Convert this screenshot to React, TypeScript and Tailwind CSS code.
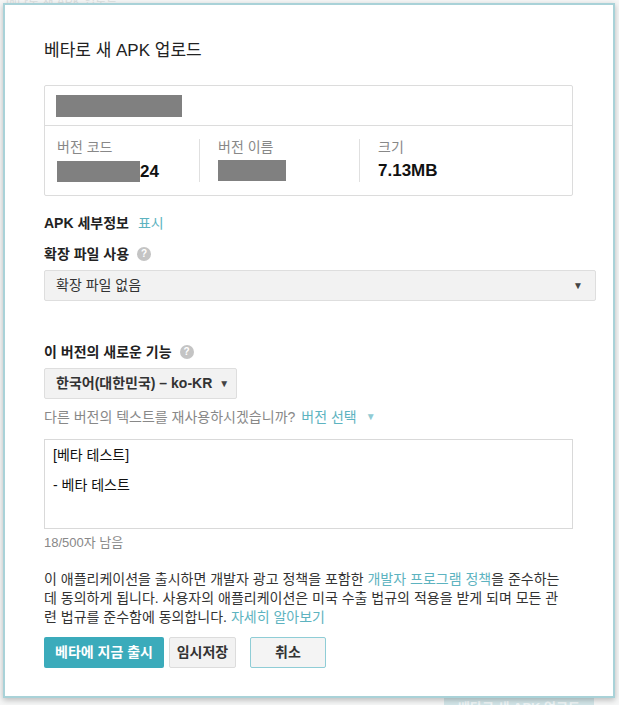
const font = {
  fontFamily: '"Liberation Sans", Arial, "Noto Sans CJK KR", sans-serif',
};

const HelpIcon = () => (
  <span className="inline-flex items-center justify-center w-[14px] h-[14px] rounded-full bg-[#c4c4c4] text-white text-[10px] font-bold leading-none ml-[8px]">
    ?
  </span>
);

const Caret = ({ className = "" }: { className?: string }) => (
  <span className={`inline-block text-[10px] leading-none ${className}`}>▼</span>
);

export default function App() {
  return (
    <div
      className="relative w-[619px] h-[705px] bg-[#f6f7f7] overflow-hidden text-[#333]"
      style={font}
    >
      {/* faded page content behind the dialog */}
      <div className="absolute left-[6px] top-[-7px] text-[12px] text-[#dde2e2]">
        베타로 새 APK 업로드
      </div>
      <div className="absolute left-[444px] top-[697px] w-[150px] h-[20px] bg-[#d3e6e9] text-[#f2f8f9] text-[13px] font-bold flex justify-center pt-[1px]">
        베타로 새 APK 업로드
      </div>

      <div className="absolute left-[3px] top-[3px] w-[612px] h-[695px] bg-white border-2 border-[#a9d2d8] shadow-[0_2px_6px_rgba(0,0,0,0.25)] pl-[39px] pr-[17px] pt-[34px]">
        <h1 className="text-[17px] leading-[24px] text-[#222]">베타로 새 APK 업로드</h1>

        {/* apk card */}
        <div className="mt-[22px] w-[529px] border border-[#dcdcdc] rounded-[2px]">
          <div className="h-[40px] border-b border-[#dcdcdc] px-[11px] flex items-center">
            <div className="w-[126px] h-[22px] bg-[#808080]" />
          </div>
          <div className="flex py-[13px]">
            <div className="w-[155px] px-[12px] border-r border-[#e0e0e0]">
              <div className="text-[14px] leading-[17px] text-[#888]">버전 코드</div>
              <div className="flex items-end mt-[4px] h-[22px]">
                <div className="w-[83px] h-[21px] bg-[#808080]" />
                <span className="text-[17px] font-bold leading-[20px] text-[#111]">24</span>
              </div>
            </div>
            <div className="w-[160px] px-[18px] border-r border-[#e0e0e0]">
              <div className="text-[14px] leading-[17px] text-[#888]">버전 이름</div>
              <div className="mt-[4px] w-[68px] h-[21px] bg-[#808080]" />
            </div>
            <div className="px-[18px]">
              <div className="text-[14px] leading-[17px] text-[#888]">크기</div>
              <div className="mt-[4px] text-[17px] font-bold leading-[22px] text-[#111]">7.13MB</div>
            </div>
          </div>
        </div>

        <div className="mt-[17px] flex items-center text-[14px] leading-[20px]">
          <span className="font-bold text-[#222]">APK 세부정보</span>
          <span className="ml-[9px] text-[#5db3c0]">표시</span>
        </div>

        <div className="mt-[11px] flex items-center text-[14px] leading-[20px] font-bold text-[#222]">
          확장 파일 사용
          <HelpIcon />
        </div>

        <div className="mt-[6px] h-[31px] w-[552px] bg-[#f2f2f2] border border-[#dedede] rounded-[2px] flex items-center justify-between pl-[11px] pr-[12px] text-[14px] text-[#333]">
          <span>확장 파일 없음</span>
          <Caret className="text-[#444]" />
        </div>

        <div className="mt-[41px] flex items-center text-[14px] leading-[20px] font-bold text-[#222]">
          이 버전의 새로운 기능
          <HelpIcon />
        </div>

        <button className="mt-[6px] h-[31px] w-[193px] bg-[#f2f2f2] border border-[#dedede] rounded-[2px] flex items-center pl-[11px] text-[14px] text-[#333] font-bold">
          <span>한국어(대한민국) – ko-KR</span>
          <Caret className="ml-[7px] text-[#444]" />
        </button>

        <div className="mt-[8px] text-[14px] leading-[20px] text-[#888] flex items-center">
          다른 버전의 텍스트를 재사용하시겠습니까?
          <span className="ml-[6px] text-[#5db3c0]">버전 선택</span>
          <Caret className="ml-[9px] text-[#8fcbd4]" />
        </div>

        <div className="mt-[12px] w-[529px] h-[90px] border border-[#d9d9d9] px-[8px] pt-[7px] text-[14px] leading-[16px] text-[#111]">
          <div>[베타 테스트]</div>
          <div className="mt-[14px]">- 베타 테스트</div>
        </div>

        <div className="mt-[5px] text-[13px] leading-[18px] text-[#888]">18/500자 남음</div>

        <p className="mt-[18px] w-[526px] text-[14px] leading-[19px] text-[#333] break-all">
          이 애플리케이션을 출시하면 개발자 광고 정책을 포함한{" "}
          <span className="text-[#5db3c0]">개발자 프로그램 정책</span>을 준수하는 데 동의하게 됩니다.
          사용자의 애플리케이션은 미국 수출 법규의 적용을 받게 되며 모든 관련 법규를 준수함에
          동의합니다. <span className="text-[#5db3c0]">자세히 알아보기</span>
        </p>

        <div className="mt-[10px] flex gap-[5px]">
          <button className="h-[31px] w-[120px] rounded-[2px] bg-[#3babbb] text-white text-[14px] font-bold">
            베타에 지금 출시
          </button>
          <button className="h-[31px] w-[67px] rounded-[2px] bg-[#f2f2f2] border border-[#dcdcdc] text-[#333] text-[14px] font-bold">
            임시저장
          </button>
          <button className="ml-[9px] h-[31px] w-[76px] rounded-[2px] bg-[#f4f4f4] border border-[#8fcdd6] text-[#333] text-[14px] font-bold">
            취소
          </button>
        </div>
      </div>
    </div>
  );
}
